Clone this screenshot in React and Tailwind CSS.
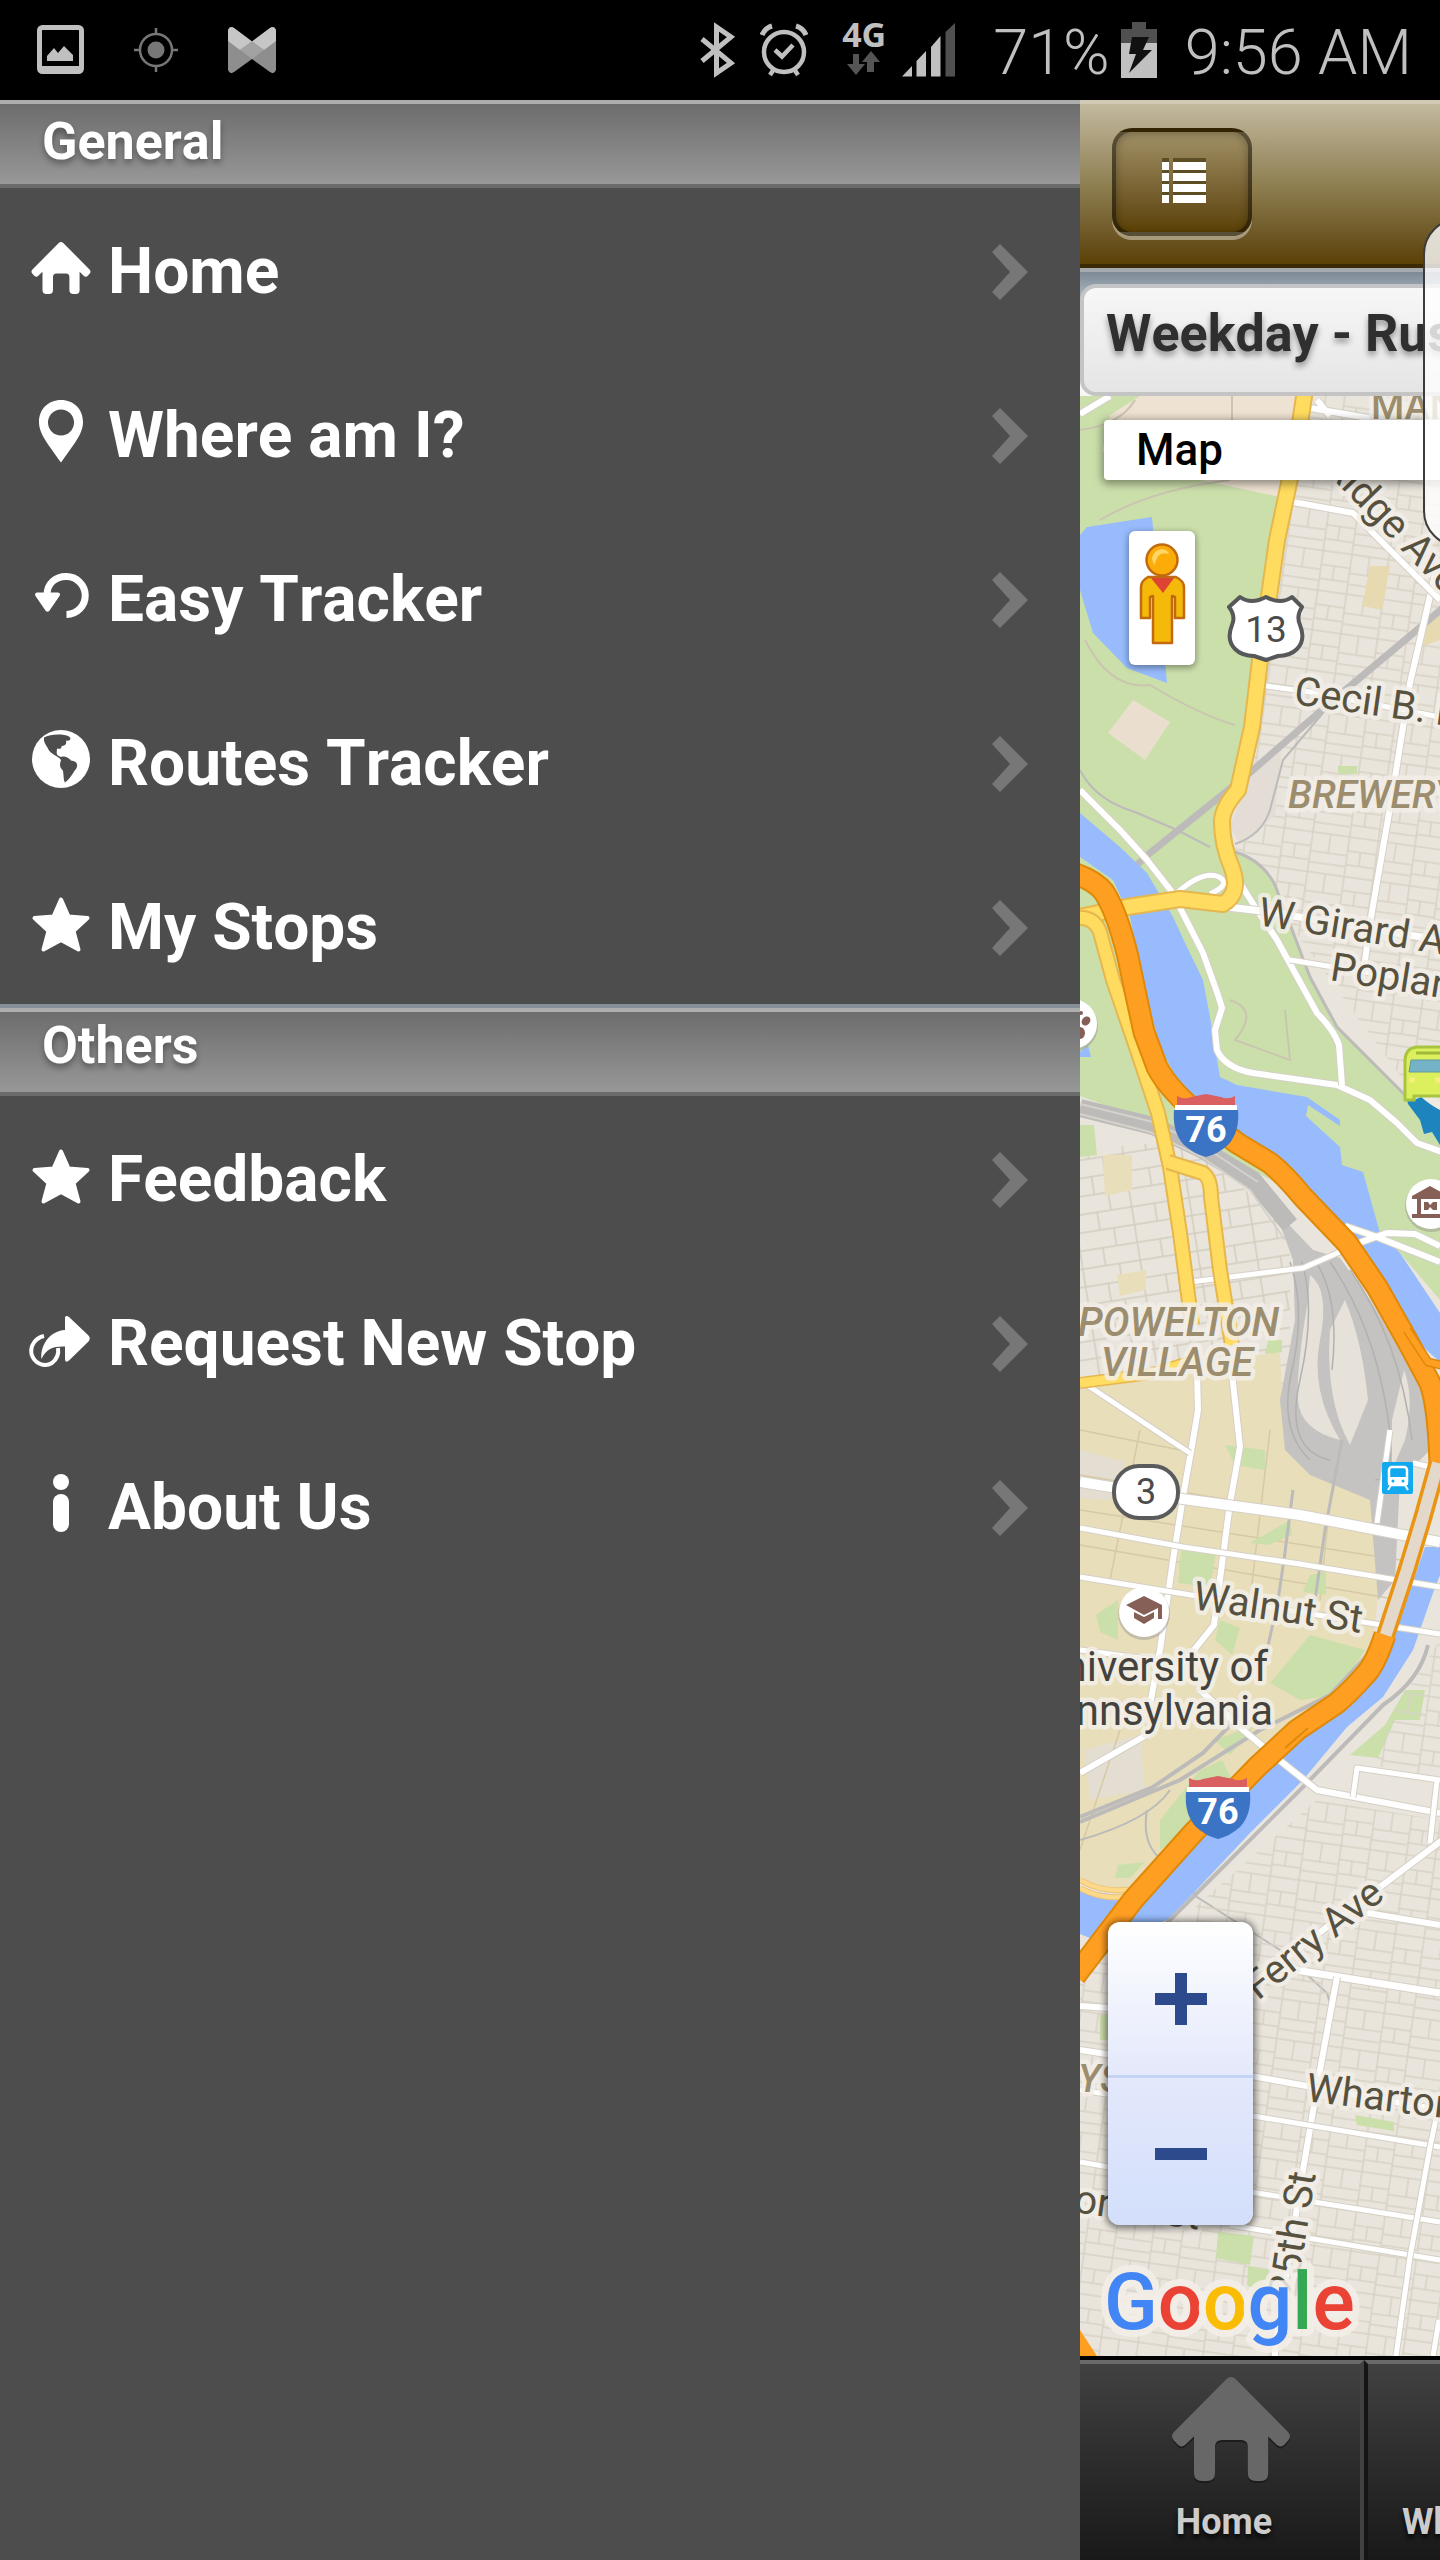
import React from "react";

/* ---------- menu icons (64 x 64 boxes) ---------- */
const HousePath = "M30.5 5.2Q33 2.8 35.5 5.200L61.500 31.500Q63.500 33.600 61.600 35.700L59.800 37.800Q57.800 39.800 55.700 37.700L51.600 33.700V52Q51.600 56 48 56H45.500Q41.400 56 41.400 52V39Q41.400 35.500 38 35.500H28.500Q25 35.500 25 39V52Q25 56 21 56H18.500Q14.500 56 14.500 52V33.700L10.300 37.700Q8.300 39.800 6.300 37.800L4.400 35.700Q2.500 33.600 4.500 31.500Z";

const shapes = {
  home: <path d={HousePath} />,
  pin: (
    <path
      fillRule="evenodd"
      d="M33-2C20-2 11 7.500 11 20 11 32 20 42 33 60.500 46 42 55 32 55 20 55 7.500 46-2 33-2ZM33 7.500A13 13 0 1 1 33 33.500 13 13 0 1 1 33 7.500Z"
    />
  ),
  undo: (
    <>
      <path d="M19 29C19 17 28 10.500 38 10.500A19 19 0 0 1 38.500 48.500" fill="none" stroke="currentColor" strokeWidth="7" />
      <path d="M9 26.500H30Q33 27 31.500 30L21.500 44.500Q19.500 47 17.500 44.500L7.500 30Q6 27 9 26.500Z" />
    </>
  ),
  globe: (
    <>
      <circle cx="33" cy="29" r="29" />
      <path
        className="fill-[#4d4d4d]"
        d="M16 7.500C22 4 35 3.500 41 6.500 44 9 42 11.500 38 10.500 39 14 37 16 33.500 16 34 19 31 19 29 18.500 29 22 27 25 33 27 36 25.500 41 27.500 43 30.500 50 31 50 36 48 39 45 42 44 47 37 52.500 35 50 36 42 34.500 40 31 37 32 33 33 30 31 26.500 25 25.500 21 20.500 19 16.500 17 14 16 11 16 7.500Z"
      />
    </>
  ),
  star: (
    <path
      d="M33 5.500L40.500 22.500 59.500 24 45.500 37 50.500 55.500 33 46 15.500 55.500 20.500 37 6.500 24 25.500 22.500Z"
      stroke="currentColor"
      strokeWidth="4"
      strokeLinejoin="round"
    />
  ),
  share: (
    <>
      <path d="M37 7.500Q38 5 41 7L60.500 25.500Q63 28.500 60.500 31.500L41 50.500Q38 53 37 50V36.500C27 36 18 38 13.500 49 12 36 21 21 37 20Z" />
      <path d="M16 26C7 28 2 36 3.500 44 6 53 16 58 24 53 29 49 31 44 30 38" fill="none" stroke="currentColor" strokeWidth="4" />
    </>
  ),
  info: (
    <>
      <circle cx="33" cy="8" r="8" />
      <rect x="25" y="20" width="16" height="38" rx="8" />
    </>
  ),
};

function MenuIcon({ name }) {
  return (
    <svg viewBox="0 0 64 64" className="size-16 shrink-0 overflow-visible" fill="currentColor" aria-hidden="true">
      {shapes[name]}
    </svg>
  );
}

function Chevron() {
  return (
    <svg viewBox="0 0 40 56" className="mt-1 h-14 w-10 shrink-0 text-[#777777]" fill="currentColor" aria-hidden="true">
      <path d="M10 0L38 28 10 56 2 48 20 28 2 8Z" />
    </svg>
  );
}

/* ---------- status bar ---------- */
function StatusBar() {
  return (
    <header className="flex h-[100px] shrink-0 items-center bg-black pr-7 pl-9 text-[#c0c0c0]">
      <svg viewBox="0 0 50 52" className="h-[52px] w-[50px]" aria-label="Screenshot saved">
        <rect x="3.500" y="3.500" width="42" height="44" rx="3" fill="none" stroke="currentColor" strokeWidth="5" />
        <path d="M3 42H46V49H3ZM11 37V32L18 24 22 29 28 22 37 31V37Z" fill="currentColor" />
      </svg>
      <svg viewBox="0 0 48 48" className="ml-[46px] h-12 w-12 text-[#777777]" aria-label="Location">
        <circle cx="24" cy="24" r="8.500" fill="currentColor" />
        <circle cx="24" cy="24" r="16" fill="none" stroke="currentColor" strokeWidth="2.500" />
        <path d="M24 2V8M24 40V46M2 24H8M40 24H46" stroke="currentColor" strokeWidth="2.500" />
      </svg>
      <svg viewBox="0 0 48 48" className="ml-12 h-12 w-12" aria-label="Mail">
        <path d="M0 4Q2-1 6 2L24 15.500 42 2Q46-1 48 4V44Q46 49 42 46L24 33 6 46Q2 49 0 44Z" fill="#8e8e8e" />
        <path d="M0 4Q2-1 6 2L24 15.500 12 24 0 15ZM48 4Q46-1 42 2L24 15.500 36 24 48 15Z" fill="#c6c6c6" />
        <path d="M24 15.500L36 24 24 33 12 24Z" fill="#a2a2a2" />
      </svg>
      <div className="flex-1" />
      <svg viewBox="0 0 38 56" className="h-14 w-[38px]" aria-label="Bluetooth">
        <path d="M3 17L32 41 17.500 51V5L32 15 3 39" fill="none" stroke="currentColor" strokeWidth="5" />
      </svg>
      <svg viewBox="0 0 48 54" className="ml-[23px] h-[54px] w-12" aria-label="Alarm">
        <circle cx="24" cy="29" r="20" fill="none" stroke="currentColor" strokeWidth="4.500" />
        <path d="M15 27L22 33.500 33 22M14 46L10 52M34 46L38 52" fill="none" stroke="currentColor" strokeWidth="4.500" />
        <path d="M2 12Q5 5 12 3M46 12Q43 5 36 3" fill="none" stroke="currentColor" strokeWidth="5" />
      </svg>
      <div className="ml-[34px] flex flex-col items-center pb-2">
        <span className="font-['Noto_Sans'] text-[34px] leading-[34px] font-bold">4G</span>
        <svg viewBox="0 0 34 24" className="h-6 w-[34px] text-[#555555]" fill="currentColor" aria-hidden="true">
          <path d="M6 3H12V13H18L9 24 0 13H6ZM20 21V11H15L24 0 33 11H27V21Z" />
        </svg>
      </div>
      <svg viewBox="0 0 54 54" className="ml-4 h-[54px] w-[54px]" fill="currentColor" aria-label="Signal">
        <path d="M0 53.500L10 43V53.500ZM14.500 38L24 28V53.500H14.500ZM29 24L38.500 13V53.500H29Z" />
        <path d="M43.500 9L53 0V53.500H43.500Z" fill="#505050" />
      </svg>
      <span className="ml-[37px] pt-1 text-[63px] leading-none font-light">71%</span>
      <svg viewBox="0 0 36 56" className="ml-[11px] h-14 w-9" aria-label="Battery charging">
        <path d="M11 0H25V7H36V21H0V7H11Z" fill="#505050" />
        <path d="M0 21H36V56H0Z" fill="#c0c0c0" />
        <path d="M11 15H28L22 28H31L8 51 15 32H8Z" fill="#111111" />
      </svg>
      <span className="ml-7 pt-1 text-[63px] leading-none font-light">9:56 AM</span>
    </header>
  );
}

/* ---------- side menu ---------- */
const groups = [
  {
    title: "General",
    items: [
      ["home", "Home"],
      ["pin", "Where am I?"],
      ["undo", "Easy Tracker"],
      ["globe", "Routes Tracker"],
      ["star", "My Stops"],
    ],
  },
  {
    title: "Others",
    items: [
      ["star", "Feedback"],
      ["share", "Request New Stop"],
      ["info", "About Us"],
    ],
  },
];

function SideMenu() {
  return (
    <nav className="w-3/4 shrink-0 bg-[#4d4d4d] text-white [font-kerning:none]">
      {groups.map((g, i) => (
        <section key={g.title} className={i === 0 ? "border-b-4 border-[#858f9a]" : ""}>
          <h2 className="flex h-[88px] items-center border-t-4 border-b-4 border-t-[#adadad] border-b-[#6b6b6b] bg-linear-to-b from-[#6d6d6d] to-[#989898] pl-[42px] text-[52px] leading-[64px] font-bold [text-shadow:0_4px_6px_rgba(0,0,0,0.35)]">
            <span className={i === 0 ? "pb-1" : "pb-3"}>{g.title}</span>
          </h2>
          <ul className={i === 0 ? "-mb-1" : ""}>
            {g.items.map(([icon, label]) => (
              <li key={label}>
                <a href="#" className="flex h-[164px] items-center gap-4 pr-[50px] pl-7">
                  <MenuIcon name={icon} />
                  <span className="flex-1 pt-1 text-[64px] leading-[76px] font-bold">{label}</span>
                  <Chevron />
                </a>
              </li>
            ))}
          </ul>
        </section>
      ))}
    </nav>
  );
}

/* ---------- map ---------- */
function Road({ d, w = 6, color = "#ffffff", edge = "#d5d0c6", e = 2 }) {
  return (
    <g fill="none" strokeLinejoin="round">
      <path d={d} stroke={edge} strokeWidth={w + e} />
      <path d={d} stroke={color} strokeWidth={w} />
    </g>
  );
}

function Label({ x, y, r = 0, size = 40, fill = "#57523f", children, ...rest }) {
  return (
    <text
      transform={`translate(${x} ${y}) rotate(${r})`}
      fontSize={size}
      fill={fill}
      stroke="#f3efe8"
      strokeOpacity="0.85"
      strokeWidth="9"
      strokeLinejoin="round"
      paintOrder="stroke"
      {...rest}
    >
      {children}
    </text>
  );
}

function Interstate({ x, y }) {
  return (
    <g transform={`translate(${x} ${y})`}>
      <path d="M3 2Q10 6 17 3L32 0 47 3Q54 6 61 2V11H3Z" fill="#d95f60" />
      <path d="M1 11H63V16H1Z" fill="#ffffff" />
      <path d="M0 16H64Q66 38 54 51 44 60 32 63 20 60 10 51-2 38 0 16Z" fill="#3b74c4" />
      <text x="32" y="48" fontSize="36" fontWeight="700" textAnchor="middle" fill="#ffffff">76</text>
    </g>
  );
}

const riverUpper =
  "M1080 813L1120 847 1147 873 1173 917 1187 947 1203 980 1210 1017 1220 1077 1237 1085 1307 1097 1340 1120V1126L1308 1105 1306 1116 1340 1147 1342 1165 1363 1172 1380 1233 1400 1253 1440 1313V1362L1423 1347 1360 1250 1303 1187 1270 1153 1230 1130 1183 1090 1160 1047 1143 980 1130 917 1113 880 1080 857Z";
const riverLower =
  "M1440 1547H1425L1400 1620 1380 1670 1337 1712 1257 1775 1193 1840 1133 1897 1080 1890V1934L1100 1942 1167 1920 1187 1900 1250 1833 1303 1780 1347 1727 1383 1697 1413 1650 1433 1593 1440 1575Z";
const highwayTop =
  "M1070 872Q1095 880 1104 892 1117 912 1128 957L1137 1000 1144 1032 1157 1067Q1170 1092 1203 1117L1237 1143 1270 1163Q1285 1175 1303 1197L1347 1243 1377 1287 1407 1340 1430 1383Q1438 1405 1440 1463";
const highwayTunnel = "M1438 1463L1423 1517 1407 1570 1385 1637";
const highwayBottom =
  "M1385 1635Q1375 1665 1365 1675 1350 1692 1337 1703L1297 1730 1257 1767 1193 1833 1133 1900 1075 1976";
const yellowMain =
  "M1305 390L1296 450 1277 540 1260 660 1252 727 1238 790Q1222 808 1222 822 1222 845 1232 868 1241 893 1223 904L1180 899 1127 907 1075 918";
const yellowWest = "M1075 918Q1094 916 1100 932L1113 980 1137 1050 1158 1113 1170 1167 1180 1233 1192 1325";
const yellowBranch = "M1168 1162L1203 1173Q1211 1178 1211 1197L1220 1270 1232 1345";

const streets = [
  ["M1080 790L1120 830 1147 860 1172 892 1203 953 1218 995 1222 1008 1215 1030 1217 1050Q1225 1068 1253 1073L1337 1085 1370 1100 1397 1123 1417 1143 1445 1153", 6],
  ["M1177 893Q1203 870 1219 877 1232 884 1210 894", 5],
  ["M1238 880L1257 910 1277 940 1300 982 1317 1013Q1334 1030 1339 1045L1342 1085", 6],
  ["M1227 907L1262 911 1440 940", 7],
  ["M1290 960L1440 984", 5],
  ["M1436 570L1410 683 1393 790 1370 923 1364 968", 6],
  ["M1260 685L1310 692 1440 717", 5],
  ["M1293 502L1353 513 1440 600", 6],
  ["M1310 408L1380 420 1440 440M1317 400L1330 416", 6],
  ["M1080 414L1110 396", 6],
  ["M1190 1282L1303 1268 1342 1251", 5],
  ["M1345 1226L1377 1237 1440 1262M1350 1246L1387 1233 1415 1234 1440 1246", 6],
  ["M1197 1373L1198 1410 1193 1440 1183 1497 1173 1560 1160 1650 1150 1705", 6],
  ["M1232 1373L1240 1447 1230 1503 1214 1625 1190 1655 1165 1680M1150 1733L1080 1773", 6],
  ["M1087 1385L1170 1440 1190 1453", 5],
  ["M1080 1482L1183 1499 1300 1515 1440 1542", 10],
  ["M1080 1528L1183 1547 1300 1564 1440 1587", 5],
  ["M1080 1577L1197 1596 1440 1634", 5],
  ["M1413 1463L1440 1469M1390 1430L1377 1523", 5],
  ["M1080 1650L1155 1660", 5],
  ["M1200 1690L1243 1730 1283 1763 1317 1790 1440 1813", 6],
  ["M1353 1797L1357 1768 1440 1780M1437 1780L1430 1843", 5],
  ["M1445 1838L1380 1887 1250 1985", 6],
  ["M1367 1913L1440 1925", 6],
  ["M1283 1968L1440 1993", 7],
  ["M1337 1977L1320 2070 1303 2170 1275 2345V2356", 6],
  ["M1080 2006L1110 2008M1080 2050L1257 2077 1440 2110", 6],
  ["M1080 2090L1253 2116 1440 2147", 5],
  ["M1080 2162L1257 2193 1440 2222", 5],
  ["M1230 2225L1440 2260", 5],
  ["M1440 2100L1430 2147 1410 2257 1396 2356M1439 2320L1433 2356", 5],
];

const rails = [
  ["M1445 606L1417 630 1337 697 1253 770 1150 853 1117 883", 7],
  ["M1080 770Q1095 800 1135 812L1177 830 1210 847M1235 844Q1262 835 1270 810L1283 760 1323 713", 2],
  ["M1235 852Q1262 860 1275 885L1310 977 1337 1027 1440 1130", 3],
  ["M1080 1108L1153 1126 1203 1150 1253 1180 1290 1225", 18],
  ["M1428 1645Q1420 1680 1383 1705L1303 1787 1203 1887 1165 1925", 4],
  ["M1080 1817L1153 1787 1203 1753 1240 1715M1080 1822L1180 1780 1260 1730 1330 1695 1372 1650", 4],
  ["M1293 1490Q1288 1530 1284 1560L1278 1600 1266 1655M1342 1440L1325 1530 1315 1600", 3],
  ["M1080 1840Q1150 1820 1170 1790M1147 1810Q1140 1850 1170 1865L1197 1897 1280 1950 1327 1993 1332 2010", 2],
];

function MapArt() {
  return (
    <svg
      viewBox="1080 396 360 1960"
      preserveAspectRatio="xMinYMin slice"
      className="absolute inset-0 h-full w-full"
      role="img"
      aria-label="Map of Philadelphia"
    >
      <defs>
        <pattern id="blocks" width="66" height="40" patternUnits="userSpaceOnUse" patternTransform="rotate(8)">
          <path d="M0 1H66M0 15H30M30 20H66M0 29H30M30 31H66M1 0V40M30 0V40M48 1V20M14 15V29" stroke="#d8d2c5" strokeWidth="1.500" fill="none" />
        </pattern>
        <pattern id="blocksWest" width="58" height="36" patternUnits="userSpaceOnUse" patternTransform="rotate(-9)">
          <path d="M0 1H58M0 19H58M1 0V36M24 0V19M38 19V36" stroke="#d3cdc0" strokeWidth="1.500" fill="none" />
        </pattern>
      </defs>
      <rect x="1080" y="396" width="360" height="1960" fill="#e9e5dc" />
      <path d="M1290 396H1440V1130L1235 850 1260 680Z" fill="url(#blocks)" />
      <path d="M1252 772L1282 745 1275 815 1240 845 1230 825Z" fill="#e4ddd6" />
      <path d="M1370 566H1390L1382 610 1362 606Z M1428 620L1440 615V640L1423 646Z" fill="#e8dab0" />
      <path d="M1338 766H1357V774H1338Z" fill="#cbdfab" />
      <path d="M1080 1150L1190 1140 1290 1230V1400H1080Z" fill="url(#blocksWest)" />
      <path d="M1103 1155H1132V1190L1105 1196ZM1117 1275L1146 1270V1290L1120 1296Z" fill="#e9deba" />

      <path d="M1080 396H1302L1277 540 1252 727 1225 815 1235 850 1262 867 1283 900 1310 977 1337 1027 1403 1093 1440 1127V1300L1400 1253 1200 1140 1080 1096Z" fill="#cbdfab" />
      <path d="M1080 1125H1094L1097 1155 1080 1157Z" fill="#cbdfab" />
      <path d="M1110 415L1140 396H1300L1285 498 1200 480 1102 452Z" fill="#eee2d2" />
      <path d="M1080 430Q1120 425 1135 400M1232 396V480M1100 520Q1150 490 1230 480M1085 640Q1110 690 1150 685 1200 715 1235 725M1230 1000Q1260 1010 1235 1040L1290 1060 1285 1010" fill="none" stroke="#c9c5b0" strokeWidth="2" />
      <path d="M1133 700L1170 722 1145 760 1108 733Z" fill="#eadfce" />
      <path d="M1080 535L1087 527 1152 517 1167 683 1127 668 1093 633 1080 590Z" fill="#97bbfd" />
      <path d="M1080 1052L1088 1045 1091 1057H1080Z" fill="#97bbfd" />

      <path d="M1080 1390L1190 1366 1280 1352 1284 1430 1330 1480 1390 1490 1372 1650 1230 1790 1130 1900 1080 1880Z" fill="#e9deba" />
      <path d="M1080 1450L1125 1462 1110 1500 1080 1498ZM1085 1750L1140 1735 1145 1790 1090 1800Z" fill="#e3ddd2" />
      <path d="M1080 1700H1150V1720L1100 1715Z" fill="#eccfc4" />
      <path d="M1080 1430L1180 1450M1080 1510L1400 1560M1080 1545L1400 1600M1080 1475L1350 1520M1140 1430L1110 1580M1270 1430L1250 1600M1120 1730L1080 1850M1330 1500L1320 1600" fill="none" stroke="#d6caa6" strokeWidth="1.500" />
      <path d="M1225 1445L1265 1450V1470L1235 1465ZM1181 1550L1216 1553 1210 1587 1178 1583ZM1250 1543L1290 1520 1292 1535 1268 1545ZM1310 1575L1326 1572V1595L1303 1592ZM1096 1615L1118 1600V1640L1100 1632ZM1220 1620L1240 1628 1232 1655 1215 1640ZM1310 1635L1365 1650 1335 1695 1300 1700 1270 1683ZM1215 1740L1255 1725 1230 1755ZM1200 1770L1222 1760 1235 1785 1190 1830 1160 1850V1820ZM1118 1865L1145 1862 1130 1878H1115Z" fill="#cbdfab" />
      <path d="M1268 1340H1282V1352L1265 1354Z" fill="#cbdfab" />

      <path d="M1275 1210L1313 1250 1340 1258 1370 1300 1400 1350 1432 1395 1430 1450 1400 1480 1395 1580 1378 1600 1370 1500 1310 1475 1285 1450 1280 1400 1295 1320 1293 1260Z" fill="#c4c3c1" />
      <path d="M1310 1275Q1330 1290 1320 1340T1340 1440Q1300 1430 1298 1400T1308 1300ZM1345 1300Q1362 1340 1368 1400L1350 1445Q1325 1400 1330 1330ZM1404 1370Q1415 1400 1405 1440L1392 1470V1420Z" fill="#e6e1d9" />
      <path d="M1290 1262Q1306 1310 1292 1370T1310 1460M1302 1262Q1316 1310 1300 1380T1330 1460M1316 1262Q1340 1300 1332 1370M1330 1262Q1370 1320 1385 1400T1375 1480M1350 1270Q1400 1340 1412 1440" fill="none" stroke="#b2b1af" strokeWidth="1.500" />

      {rails.map(([d, w]) => (
        <path key={d} d={d} fill="none" stroke="#bcbbba" strokeWidth={w} />
      ))}
      <path d="M1080 1104L1153 1122 1203 1146 1258 1182M1080 1114L1150 1132 1200 1156 1250 1190 1285 1240" fill="none" stroke="#d5d1cb" strokeWidth="2" />

      <path d={riverUpper} fill="#97bbfd" />
      <path d={riverLower} fill="#97bbfd" />
      <path d="M1425 1690H1405L1385 1725 1350 1755 1378 1758 1395 1720H1420Z" fill="#cbdfab" />
      <path d="M1400 1700L1440 1640V1780L1375 1765Z" fill="url(#blocks)" />
      <path d="M1317 1800L1440 1820V2356H1080V1960L1180 1920Z" fill="url(#blocks)" />
      <path d="M1355 2115L1394 2122V2131L1357 2125ZM1218 2232L1254 2236 1250 2265 1216 2258ZM1248 2266L1270 2270 1258 2292 1247 2285ZM1100 2015H1110V2040H1100Z" fill="#cbdfab" />

      {streets.map(([d, w]) => (
        <Road key={d} d={d} w={w} />
      ))}

      <Road d="M1080 1383L1150 1374 1195 1360" w={9} color="#ffdc62" edge="#e5b74e" e={3} />
      <Road d="M1080 1880Q1105 1895 1140 1888M1080 1888Q1105 1902 1135 1895" w={4} color="#ffd98a" edge="#edc479" />
      <Road d={yellowMain} w={14} color="#ffdb5f" edge="#e5b74e" e={4} />
      <Road d={yellowWest} w={12} color="#ffdb5f" edge="#e5b74e" e={4} />
      <Road d={yellowBranch} w={12} color="#ffdb5f" edge="#e5b74e" e={4} />
      <Road d="M1432 1455L1436 1400" w={6} color="#ffdb5f" edge="#e5b74e" />
      <Road d={highwayTop} w={19} color="#ff9f22" edge="#df8909" e={4} />
      <Road d="M1407 1330L1428 1362 1445 1366" w={6} color="#ff9f22" edge="#df8909" e={3} />
      <Road d={highwayTunnel} w={12} color="#e4d8cb" edge="#ea9414" e={7} />
      <Road d={highwayBottom} w={19} color="#ff9f22" edge="#df8909" e={4} />
      <path d="M1285 1748L1308 1728" stroke="#df8909" strokeWidth="2" />
      <path d="M1080 2330L1097 2356H1080Z" fill="#ff9f22" />

      <g fontWeight="500">
        <Label x={1371} y={419} size={38} fill="#9b8d6e">MANTUA</Label>
        <Label x={1288} y={808} size={39} fill="#9b8d6e" fontStyle="italic">BREWERYTOWN</Label>
        <Label x={1078} y={1336} size={40} fill="#9b8d6e" fontStyle="italic">POWELTON</Label>
        <Label x={1101} y={1376} size={40} fill="#9b8d6e" fontStyle="italic">VILLAGE</Label>
        <Label x={1078} y={2092} size={38} fill="#9b8d6e" fontStyle="italic">YS</Label>
      </g>
      <Label x={1323} y={469} r={46}>Ridge Ave</Label>
      <Label x={1293} y={704} r={8}>Cecil B. Moore Ave</Label>
      <Label x={1257} y={925} r={9}>W Girard Ave</Label>
      <Label x={1329} y={980} r={9}>Poplar St</Label>
      <Label x={1192} y={1609} r={8}>Walnut St</Label>
      <Label x={1268} y={1681} size={42} fill="#44423d" textAnchor="end">University of</Label>
      <Label x={1273} y={1725} size={42} fill="#44423d" textAnchor="end">Pennsylvania</Label>
      <Label x={1258} y={2001} r={-39}>Ferry Ave</Label>
      <Label x={1305} y={2101} r={7}>Wharton St</Label>
      <Label x={1296} y={2299} r={-81}>25th St</Label>
      <Label x={1073} y={2212} r={8}>orris St</Label>

      <path
        d="M1240 597Q1251 605 1266 597 1281 605 1292 597L1302 607Q1296 616 1300 625 1306 640 1297 649 1290 656 1278 656L1266 660 1254 656Q1242 656 1235 649 1226 640 1232 625 1236 616 1229 607Z"
        fill="#ffffff"
        stroke="#56585a"
        strokeWidth="4"
        strokeLinejoin="round"
      />
      <text x="1266" y="642" fontSize="37" textAnchor="middle" fill="#4b4b4b">13</text>
      <Interstate x={1174} y={1094} />
      <Interstate x={1186} y={1776} />
      <rect x="1114" y="1466" width="64" height="52" rx="25" fill="#ffffff" stroke="#5a5b5c" strokeWidth="4" />
      <text x="1146" y="1504" fontSize="36" textAnchor="middle" fill="#4b4b4b">3</text>

      <g>
        <circle cx="1144" cy="1614" r="26" fill="#9d9a92" opacity="0.500" />
        <circle cx="1144" cy="1612" r="25" fill="#ffffff" />
        <path d="M1126 1605L1144 1596 1162 1605V1619H1158V1608L1144 1615ZM1134 1612L1144 1617 1154 1612V1618L1144 1624 1134 1618Z" fill="#866057" />
      </g>
      <g>
        <circle cx="1431" cy="1206" r="26" fill="#9d9a92" opacity="0.500" />
        <circle cx="1431" cy="1204" r="25" fill="#ffffff" />
        <path d="M1412 1196L1430 1186 1448 1196V1199H1412ZM1417 1199H1421V1214H1417ZM1412 1214H1448V1218H1412ZM1424 1202H1428L1430 1205 1433 1202H1437V1210H1433L1430 1207 1428 1210H1424Z" fill="#866057" />
      </g>
      <g>
        <circle cx="1072" cy="1026" r="26" fill="#9d9a92" opacity="0.500" />
        <circle cx="1072" cy="1024" r="25" fill="#ffffff" />
        <ellipse cx="1086" cy="1021" rx="4" ry="5" transform="rotate(40 1086 1021)" fill="#866057" />
        <ellipse cx="1080" cy="1033" rx="5" ry="6" fill="#866057" />
        <circle cx="1081" cy="1013" r="2" fill="#866057" />
      </g>
      <g>
        <rect x="1382" y="1462" width="31" height="32" rx="2" fill="#12a9ee" />
        <rect x="1389" y="1467" width="18" height="18" rx="3" fill="none" stroke="#ffffff" strokeWidth="2.500" />
        <path d="M1389 1478H1407V1484H1389ZM1391 1485L1388 1490M1405 1485L1408 1490" fill="#ffffff" stroke="#ffffff" strokeWidth="2" />
        <circle cx="1393" cy="1481" r="1.500" fill="#12a9ee" />
        <circle cx="1403" cy="1481" r="1.500" fill="#12a9ee" />
      </g>
      <g>
        <path d="M1405 1092L1414 1100 1428 1094 1440 1106V1145L1432 1132 1424 1134 1420 1120 1408 1104Z" fill="#1d84bd" />
        <path d="M1420 1096Q1430 1090 1440 1102V1110Q1430 1105 1420 1096Z" fill="#eeeae2" />
        <path d="M1405 1098V1060Q1406 1047 1418 1047H1450V1096H1414V1100H1405Z" fill="#dcef5c" stroke="#a9c540" strokeWidth="3" />
        <path d="M1411 1060H1450V1072H1409Z" fill="#74b2c8" stroke="#659a9b" strokeWidth="1" />
        <path d="M1416 1053H1440" stroke="#9fb83b" strokeWidth="3" />
        <circle cx="1412" cy="1080" r="3" fill="#f7ef79" />
        <circle cx="1438" cy="1080" r="3" fill="#f7ef79" />
      </g>

      <text
        x="1104"
        y="2329"
        fontSize="79"
        fontWeight="500"
        stroke="#f3efe8"
        strokeWidth="14"
        strokeOpacity="0.850"
        strokeLinejoin="round"
        paintOrder="stroke"
      >
        <tspan fill="#4285f4">G</tspan>
        <tspan fill="#ea4335">o</tspan>
        <tspan fill="#fbbc05">o</tspan>
        <tspan fill="#4285f4">g</tspan>
        <tspan fill="#34a853">l</tspan>
        <tspan fill="#ea4335">e</tspan>
      </text>
    </svg>
  );
}

function MapView() {
  return (
    <div className="relative flex-1 overflow-hidden">
      <MapArt />
      <button className="absolute top-6 left-6 h-[60px] w-[600px] rounded-[4px] bg-white pl-8 text-left text-[44px] leading-[58px] font-medium text-black shadow-[0_2px_8px_2px_rgba(0,0,0,0.4)]">
        Map
      </button>
      <button aria-label="Street View" className="absolute top-[135px] left-[49px] flex h-[134px] w-[66px] justify-center rounded-md bg-white pt-[11px] shadow-[0_2px_6px_1px_rgba(0,0,0,0.35)]">
        <svg viewBox="0 0 48 104" className="h-[104px] w-12" stroke="#c26a10" strokeWidth="2.500" strokeLinejoin="round">
          <path d="M10 35H38Q46 39 46 45V76H37V55L34 54V101H15V54L12 55V76H3V45Q3 39 10 35Z" fill="#f5b90a" />
          <path d="M13 36H36L25 51Z" fill="#dd4433" stroke="none" />
          <circle cx="24" cy="18" r="15.500" fill="#fbac08" />
          <path d="M14 17Q15 8 24 7 30 8 31 12 24 10 20 14 17 21 16 23Z" fill="#ffd667" stroke="none" />
        </svg>
      </button>
      <div className="absolute bottom-[131px] left-7 flex h-[303px] w-[145px] flex-col rounded-[12px] bg-linear-to-b from-white via-[#e4e9fb] to-[#d3dffb] text-[#2d4a8c] shadow-[0_1px_6px_3px_rgba(0,0,0,0.45)]">
        <button aria-label="Zoom in" className="flex h-[156px] items-center justify-center border-b-3 border-[#c5d3f5]">
          <svg viewBox="0 0 52 52" className="size-[52px]" fill="currentColor">
            <path d="M20 0H32V20H52V32H32V52H20V32H0V20H20Z" />
          </svg>
        </button>
        <button aria-label="Zoom out" className="flex flex-1 items-center justify-center pt-1">
          <svg viewBox="0 0 52 52" className="size-[52px]" fill="currentColor">
            <path d="M0 20H52V32H0Z" />
          </svg>
        </button>
      </div>
    </div>
  );
}

/* ---------- sliding content panel ---------- */
function Content() {
  return (
    <main className="relative flex min-w-0 flex-1 flex-col overflow-hidden">
      <div className="flex h-[168px] shrink-0 border-t-4 border-b-4 border-t-[#d3cab6] border-b-[#3b2a04] bg-linear-to-b from-[#c3b99f] via-[#8f8052] to-[#5b4104] pt-6 pl-8">
        <button aria-label="Menu" className="flex h-[108px] w-[140px] items-center justify-center rounded-[20px] border-4 border-black/45 bg-linear-to-b from-[#a29267] to-[#5b4103] pb-1 pl-1 shadow-[0_4px_0_rgba(255,255,255,0.4),inset_0_2px_8px_rgba(0,0,0,0.3)]">
          <svg viewBox="0 0 46 46" className="size-[46px]">
            <path d="M1 1H8V5H1ZM12 1H45V5H12ZM1 13H8V16H1ZM12 13H45V16H12ZM1 24H8V27H1ZM12 24H45V27H12ZM1 35H8V39H1ZM12 35H45V39H12Z" fill="#5c4d24" />
            <path d="M1 5H8V13H1ZM12 5H45V13H12ZM1 16H8V24H1ZM12 16H45V24H12ZM1 27H8V35H1ZM12 27H45V35H12ZM1 38H8V46H1ZM12 38H45V46H12Z" fill="#ffffff" />
          </svg>
        </button>
      </div>
      <div className="shrink-0 border-t-4 border-[#a7abb0] bg-linear-to-b from-[#7d8a96] via-[#a9b7c3] via-20% to-[#f7f7f7] to-50% pt-3">
        <button className="block h-[112px] w-[1400px] rounded-[16px] border-4 border-[#c4c4c4] bg-linear-to-b from-[#f7f7f7] to-[#e5e5e5] pb-3 pl-[22px] text-left text-[52px] leading-[92px] font-bold text-[#2f2f2f] [font-kerning:none] [text-shadow:0_4px_6px_rgba(0,0,0,0.4)]">
          Weekday - Rush Hour
        </button>
      </div>
      <MapView />
      <div className="absolute top-[118px] left-[343px] h-[329px] w-[400px] rounded-[36px] border-2 border-[#3c3c3c] bg-white/80" />
      <nav className="flex h-[204px] w-[1440px] shrink-0 border-t-4 border-black bg-linear-to-b from-[#424242] to-[#191919] text-[36px] font-bold text-[#cccccc]">
        {["Home", "Where am I?"].map((label) => (
          <a
            key={label}
            href="#"
            className="flex h-full w-[284px] shrink-0 flex-col items-center border-t-4 border-r-4 border-l-4 border-t-[#6a6a6a] border-r-[#414141] border-l-[#151515] pt-2 pr-2 first:border-l-0 first:pr-0 first:pl-2 [text-shadow:0_4px_5px_rgba(0,0,0,0.8)]"
          >
            <svg viewBox="0 0 140 112" className="h-28 w-[140px]" aria-hidden="true">
              <g transform="translate(11 -3) scale(2)">
                <path d={HousePath} fill="#1c1c1c" transform="translate(0 1)" />
                <path d={HousePath} fill="#676767" />
              </g>
            </svg>
            <span className="mt-4 leading-[44px]">{label}</span>
          </a>
        ))}
      </nav>
    </main>
  );
}

export default function App() {
  return (
    <div className="flex min-h-screen flex-col overflow-hidden bg-black font-[Roboto,sans-serif]">
      <StatusBar />
      <div className="flex flex-1">
        <SideMenu />
        <Content />
      </div>
    </div>
  );
}
